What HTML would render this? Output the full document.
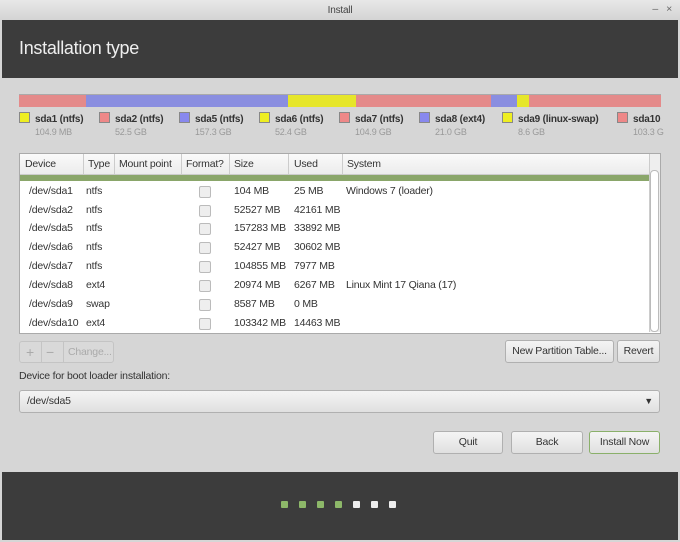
<!DOCTYPE html><html><head><style>
body{margin:0;width:680px;height:542px;background:#d6d6d6;font-family:"Liberation Sans",sans-serif;font-size:10.5px;color:#333;position:relative;overflow:hidden;letter-spacing:-0.2px}
.a{position:absolute}
.btn{position:absolute;background:linear-gradient(#f4f4f4,#e0e0e0);border:1px solid #b0b0b0;border-radius:3px;text-align:center;line-height:21px;font-size:10.5px;color:#333}
.sw{display:inline-block;width:9px;height:9px;border:1px solid #888;margin-right:5px;vertical-align:-1px}
.lg{position:absolute;top:112px;font-weight:bold;font-size:10px;color:#333;white-space:nowrap}
.lg div{font-weight:normal;font-size:9px;color:#999;margin-left:16px;margin-top:2px}
.row{position:absolute;left:20px;width:629px;height:19px;line-height:19px;font-size:10.5px}
.row span{position:absolute}
.cb{position:absolute;left:179px;top:4px;width:10px;height:10px;border:1px solid #bbb;border-radius:2px;background:#eee}
</style></head><body>
<div class="a" style="left:0;top:0;width:680px;height:20px;background:linear-gradient(#e8e8e8,#d4d4d4);text-align:center;line-height:22px;color:#444;font-size:10px">Install</div>
<div class="a" style="right:22px;top:3px;color:#666">–</div><div class="a" style="right:8px;top:3px;color:#666">×</div>
<div class="a" style="left:2px;top:20px;width:676px;height:58px;background:#3c3c3c"></div>
<div class="a" style="left:19px;top:38px;color:#eee;font-size:18px;letter-spacing:-0.3px">Installation type</div>
<div class="a" style="left:19px;top:94px;width:642px;height:12px;display:flex;border-top:1px solid #aaa;background:repeating-linear-gradient(90deg,transparent 0 16px,rgba(0,0,0,.08) 16px 17px)">
<div style="width:67px;background:#e48a8a"></div><div style="width:202px;background:#8a8ee0"></div><div style="width:68px;background:#e6e62a"></div><div style="width:135px;background:#e48a8a"></div><div style="width:26px;background:#8a8ee0"></div><div style="width:12px;background:#e6e62a"></div><div style="flex:1;background:#e48a8a"></div></div>
<div class="lg" style="left:19px"><span class="sw" style="background:#ee2"></span>sda1 (ntfs)<div>104.9 MB</div></div>
<div class="lg" style="left:99px"><span class="sw" style="background:#e88"></span>sda2 (ntfs)<div>52.5 GB</div></div>
<div class="lg" style="left:179px"><span class="sw" style="background:#88e"></span>sda5 (ntfs)<div>157.3 GB</div></div>
<div class="lg" style="left:259px"><span class="sw" style="background:#ee2"></span>sda6 (ntfs)<div>52.4 GB</div></div>
<div class="lg" style="left:339px"><span class="sw" style="background:#e88"></span>sda7 (ntfs)<div>104.9 GB</div></div>
<div class="lg" style="left:419px"><span class="sw" style="background:#88e"></span>sda8 (ext4)<div>21.0 GB</div></div>
<div class="lg" style="left:502px"><span class="sw" style="background:#ee2"></span>sda9 (linux-swap)<div>8.6 GB</div></div>
<div class="lg" style="left:617px"><span class="sw" style="background:#e88"></span>sda10<div>103.3 G</div></div>
<div class="a" style="left:19px;top:153px;width:640px;height:179px;background:#fff;border:1px solid #aaa"></div>
<div class="a" style="left:20px;top:154px;width:629px;height:20px;background:linear-gradient(#fafafa,#ececec);border-bottom:1px solid #ccc"></div>
<div class="a" style="left:25px;top:158px">Device</div><div class="a" style="left:83px;top:154px;height:20px;border-left:1px solid #ccc"></div>
<div class="a" style="left:88px;top:158px">Type</div><div class="a" style="left:114px;top:154px;height:20px;border-left:1px solid #ccc"></div>
<div class="a" style="left:119px;top:158px">Mount point</div><div class="a" style="left:181px;top:154px;height:20px;border-left:1px solid #ccc"></div>
<div class="a" style="left:186px;top:158px">Format?</div><div class="a" style="left:229px;top:154px;height:20px;border-left:1px solid #ccc"></div>
<div class="a" style="left:234px;top:158px">Size</div><div class="a" style="left:288px;top:154px;height:20px;border-left:1px solid #ccc"></div>
<div class="a" style="left:294px;top:158px">Used</div><div class="a" style="left:342px;top:154px;height:20px;border-left:1px solid #ccc"></div>
<div class="a" style="left:347px;top:158px">System</div>
<div class="a" style="left:20px;top:175px;width:629px;height:6px;background:#8aa66a"></div>
<div class="a" style="left:649px;top:154px;width:10px;height:178px;background:#eee;border-left:1px solid #ccc"></div>
<div class="a" style="left:650px;top:170px;width:7px;height:160px;background:#fff;border:1px solid #bbb;border-radius:4px"></div>
<div class="row" style="top:182px"><span style="left:9px">/dev/sda1</span><span style="left:66px">ntfs</span><i class="cb"></i><span style="left:214px">104 MB</span><span style="left:274px">25 MB</span><span style="left:326px">Windows 7 (loader)</span></div>
<div class="row" style="top:201px"><span style="left:9px">/dev/sda2</span><span style="left:66px">ntfs</span><i class="cb"></i><span style="left:214px">52527 MB</span><span style="left:274px">42161 MB</span></div>
<div class="row" style="top:219px"><span style="left:9px">/dev/sda5</span><span style="left:66px">ntfs</span><i class="cb"></i><span style="left:214px">157283 MB</span><span style="left:274px">33892 MB</span></div>
<div class="row" style="top:238px"><span style="left:9px">/dev/sda6</span><span style="left:66px">ntfs</span><i class="cb"></i><span style="left:214px">52427 MB</span><span style="left:274px">30602 MB</span></div>
<div class="row" style="top:257px"><span style="left:9px">/dev/sda7</span><span style="left:66px">ntfs</span><i class="cb"></i><span style="left:214px">104855 MB</span><span style="left:274px">7977 MB</span></div>
<div class="row" style="top:276px"><span style="left:9px">/dev/sda8</span><span style="left:66px">ext4</span><i class="cb"></i><span style="left:214px">20974 MB</span><span style="left:274px">6267 MB</span><span style="left:326px">Linux Mint 17 Qiana (17)</span></div>
<div class="row" style="top:295px"><span style="left:9px">/dev/sda9</span><span style="left:66px">swap</span><i class="cb"></i><span style="left:214px">8587 MB</span><span style="left:274px">0 MB</span></div>
<div class="row" style="top:314px"><span style="left:9px">/dev/sda10</span><span style="left:66px">ext4</span><i class="cb"></i><span style="left:214px">103342 MB</span><span style="left:274px">14463 MB</span></div>
<div class="a" style="left:19px;top:341px;width:93px;height:20px;border:1px solid #c4c4c4;border-radius:3px;background:#d9d9d9;color:#aaa;line-height:20px"><span style="position:absolute;left:6px;font-size:14px">+</span><span style="position:absolute;left:26px;font-size:14px">−</span><span style="position:absolute;left:48px">Change...</span><i style="position:absolute;left:21px;top:0;height:20px;border-left:1px solid #c4c4c4"></i><i style="position:absolute;left:43px;top:0;height:20px;border-left:1px solid #c4c4c4"></i></div>
<div class="btn" style="left:505px;top:340px;width:107px;height:21px">New Partition Table...</div>
<div class="btn" style="left:617px;top:340px;width:41px;height:21px">Revert</div>
<div class="a" style="left:19px;top:370px">Device for boot loader installation:</div>
<div class="btn" style="left:19px;top:390px;width:639px;height:21px;text-align:left"><span style="margin-left:7px">/dev/sda5</span><span style="position:absolute;right:6px;font-size:9px">▼</span></div>
<div class="btn" style="left:433px;top:431px;width:68px;height:21px">Quit</div>
<div class="btn" style="left:511px;top:431px;width:70px;height:21px">Back</div>
<div class="btn" style="left:589px;top:431px;width:69px;height:21px;border-color:#8ab06a">Install Now</div>
<div class="a" style="left:2px;top:472px;width:676px;height:68px;background:#3c3c3c"></div>
<div class="a" style="left:281px;top:501px;display:flex;gap:11px">
<i style="width:7px;height:7px;border-radius:1px;background:#8db869"></i><i style="width:7px;height:7px;border-radius:1px;background:#8db869"></i><i style="width:7px;height:7px;border-radius:1px;background:#8db869"></i><i style="width:7px;height:7px;border-radius:1px;background:#8db869"></i><i style="width:7px;height:7px;border-radius:1px;background:#eee"></i><i style="width:7px;height:7px;border-radius:1px;background:#eee"></i><i style="width:7px;height:7px;border-radius:1px;background:#eee"></i></div>
</body></html>
